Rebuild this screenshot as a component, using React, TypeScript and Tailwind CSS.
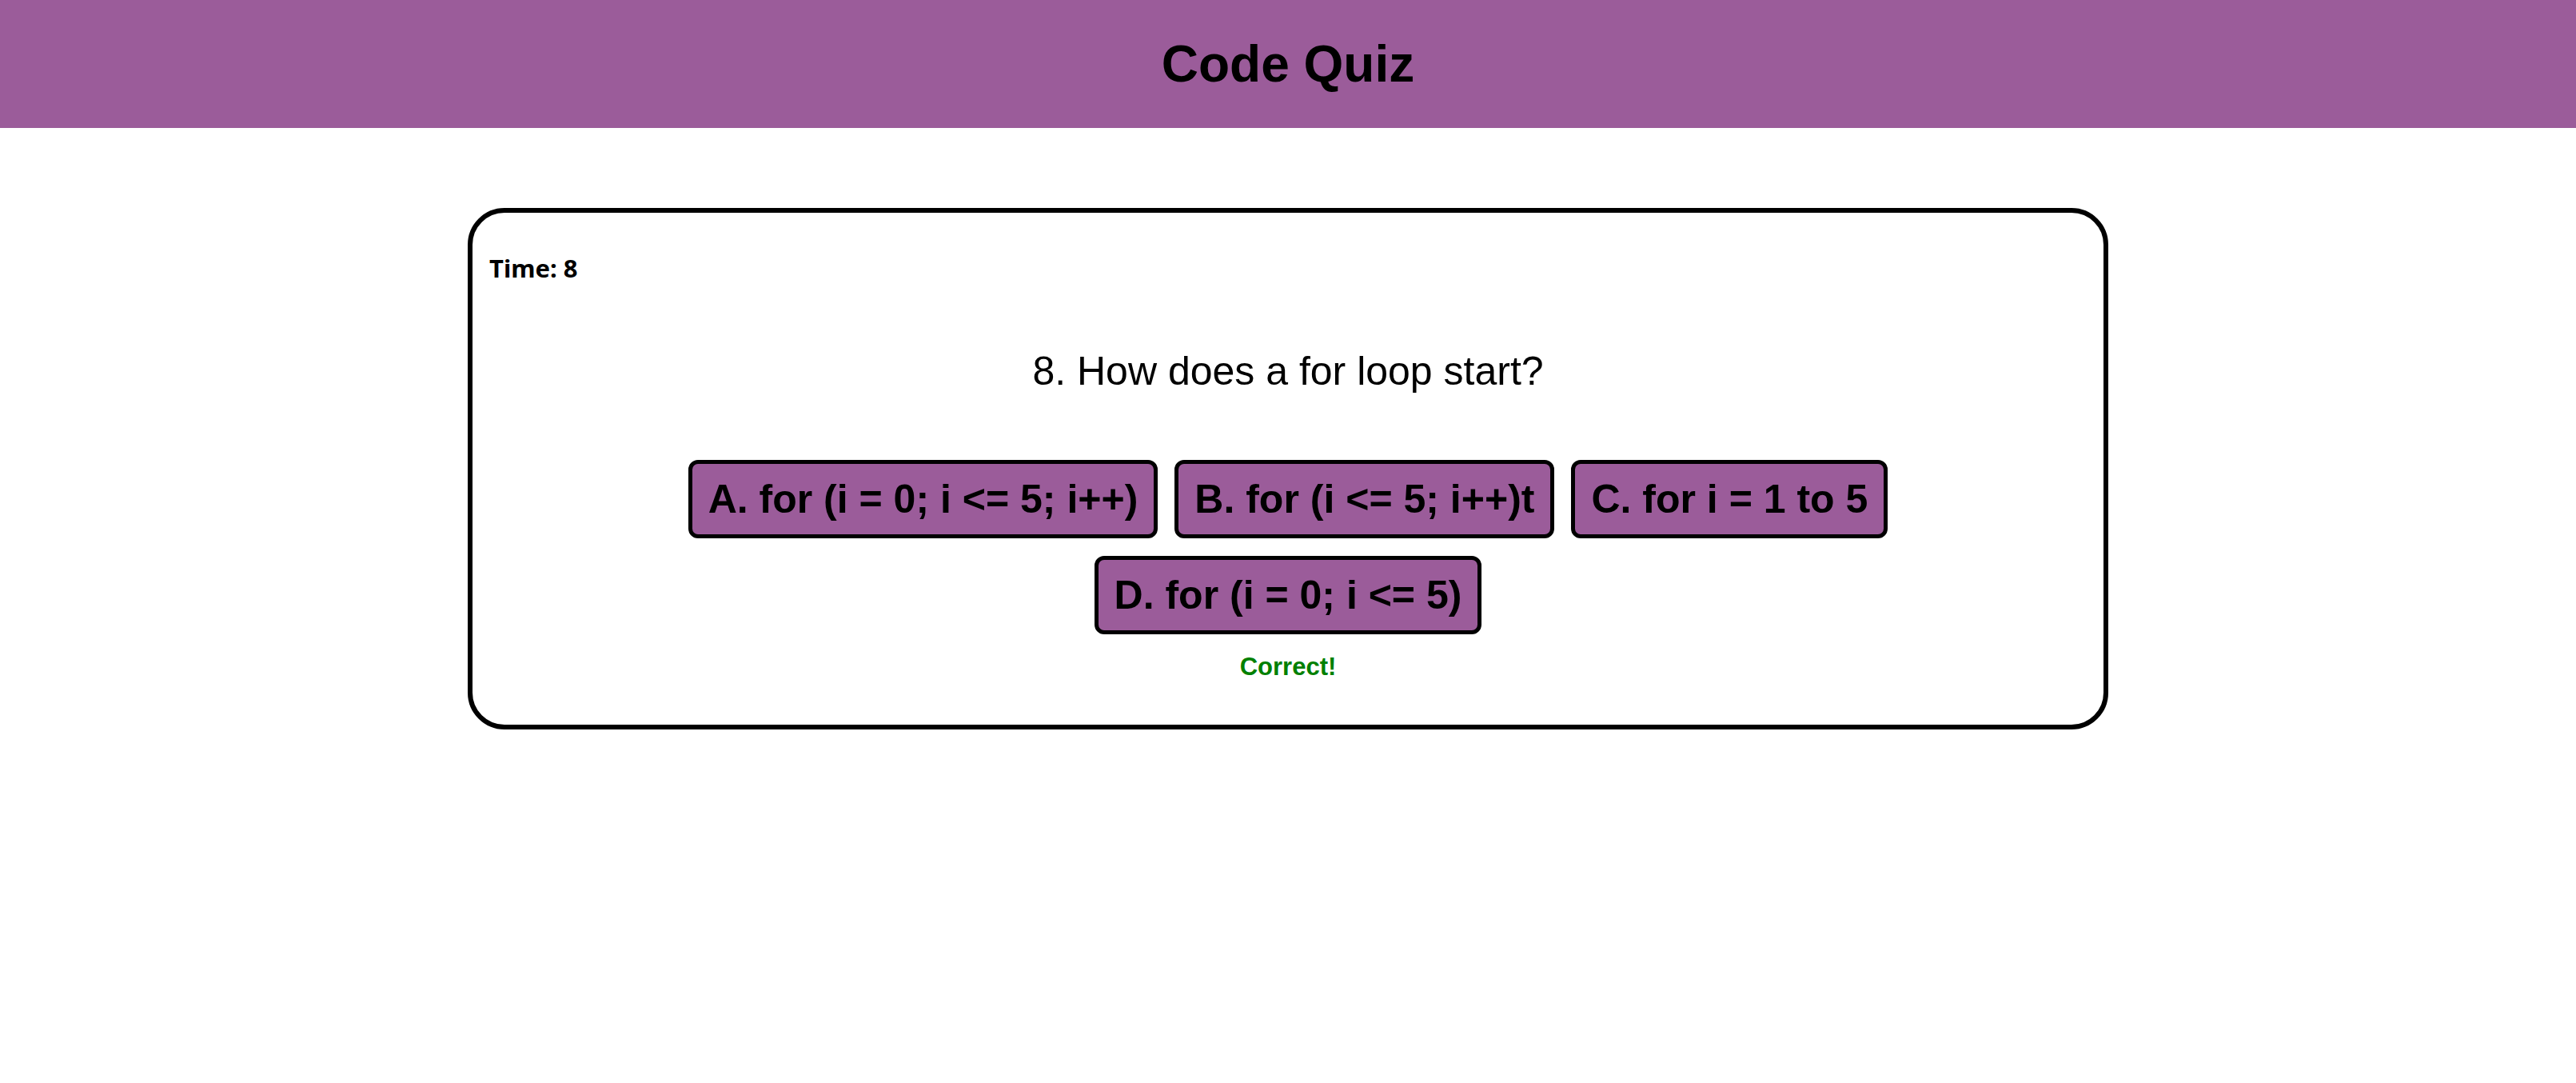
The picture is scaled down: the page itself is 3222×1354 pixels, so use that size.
const CHOICES = [
  "A. for (i = 0; i <= 5; i++)",
  "B. for (i <= 5; i++)t",
  "C. for i = 1 to 5",
  "D. for (i = 0; i <= 5)",
];

const arial = "font-['Liberation_Sans',Arial,sans-serif]";

export default function App() {
  return (
    <div className={`min-h-screen bg-white text-black ${arial}`}>
      {/* Header */}
      <header className="flex h-[160px] items-center justify-center bg-[#9b5c9a]">
        <h1 className="text-[64px] font-bold leading-none">Code Quiz</h1>
      </header>

      {/* Quiz card */}
      <main className="mx-auto mt-[100px] w-[2052px] rounded-[46px] border-[6px] border-black px-[21px] pt-[49px] pb-[52px]">
        <p className="font-['Noto_Sans',sans-serif] text-[31px] font-bold leading-[40px]">Time: 8</p>

        <h2 className="mt-[79px] text-center text-[50px] leading-[60px]">8. How does a for loop start?</h2>

        <div className="mx-auto mt-[81px] flex max-w-[1600px] flex-wrap justify-center gap-x-[21px] gap-y-[22px]">
          {CHOICES.map((c) => (
            <button
              key={c}
              className="rounded-[12px] border-[5px] border-black bg-[#9b5c9a] px-[20px] py-[15px] text-[50px] font-bold leading-[58px]"
            >
              {c}
            </button>
          ))}
        </div>

        <p className="mt-[21px] text-center text-[31px] font-bold leading-[40px] text-[#008000]">Correct!</p>
      </main>
    </div>
  );
}
